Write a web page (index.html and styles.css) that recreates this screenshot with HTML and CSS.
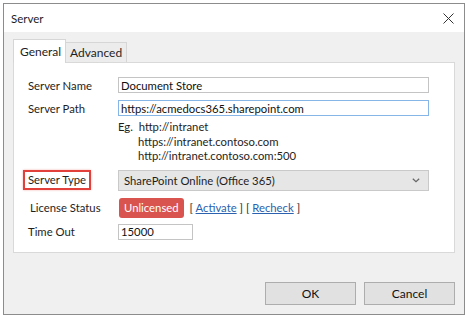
FILE: index.html
```html
<!doctype html>
<html>
<head>
<meta charset="utf-8">
<title>Server</title>
	<link rel="stylesheet" href="styles.css">
</head>

<body>
	<div class="window">
		<div class="titlebar">
			<span class="title">Server</span>
			<svg class="close" width="11" height="11" viewBox="0 0 11 11">
				<path d="M0.5 0.5 L10.5 10.5 M10.5 0.5 L0.5 10.5" stroke="#333" stroke-width="1" fill="none"/>
			</svg>
		</div>
		<div class="content">
			<div class="tabs">
				<div class="tab active">General</div>
				<div class="tab">Advanced</div>
			</div>
			<div class="panel">
				<div class="row row-name">
					<span class="lbl">Server Name</span>
					<input class="field wide" type="text" value="Document Store">
				</div>
				<div class="row row-path">
					<span class="lbl">Server Path</span>
					<input class="field wide focus" type="text" value="https://acmedocs365.sharepoint.com">
				</div>
				<div class="row row-eg">
					<span class="lbl"></span>
					<div class="eg">
						<div>Eg.&nbsp; http://intranet</div>
						<div class="eg-more">https://intranet.contoso.com</div>
						<div class="eg-more">http://intranet.contoso.com:500</div>
					</div>
				</div>
				<div class="row row-type">
					<span class="lbl"><span class="marked">Server Type</span></span>
					<div class="select">
						<span>SharePoint Online (Office 365)</span>
						<svg width="8" height="5" viewBox="0 0 8 5">
							<path d="M0.8 0.8 L4 3.8 L7.2 0.8" stroke="#666" stroke-width="1.2" fill="none"/>
						</svg>
					</div>
				</div>
				<div class="row row-license">
					<span class="lbl lbl-license">License Status</span>
					<div class="license">
						<span class="badge">Unlicensed</span>
						<span class="links">[ <a href="#">Activate</a> ] [ <a href="#">Recheck</a> ]</span>
					</div>
				</div>
				<div class="row row-time">
					<span class="lbl">Time Out</span>
					<input class="field short" type="text" value="15000">
				</div>
			</div>
			<div class="actions">
				<button class="btn ok">OK</button>
				<button class="btn">Cancel</button>
			</div>
		</div>
	</div>
</body>
</html>
```

FILE: styles.css
```css
*{box-sizing: border-box;}
body{
	margin: 0;
	padding: 3px;
	background-color: #fff;
	font-family: "Lato", "Open Sans", sans-serif;
	font-size: 11.3px;
	color: #1e1e1e;
}
.window{
	width: 462px;
	height: 312px;
	border: 1px solid #8c8c8c;
	background-color: #f0f0f0;
	display: flex;
	flex-direction: column;
}
.titlebar{
	height: 28px;
	background-color: #fff;
	display: flex;
	align-items: center;
	justify-content: space-between;
	padding: 0 10px 0 7px;
}
.title{
	font-size: 11.5px;
}
.content{
	padding: 7px 9px 0 9px;
	flex: 1;
	display: flex;
	flex-direction: column;
}
.tabs{
	display: flex;
	align-items: flex-end;
}
.tab{
	height: 20px;
	padding: 0 4px;
	border: 1px solid #d6d6d6;
	border-bottom: none;
	border-left: none;
	background-color: #ececec;
	display: flex;
	align-items: center;
	font-size: 12px;
}
.tab.active{
	height: 24px;
	padding: 0 6px 0 6px;
	border-left: 1px solid #d6d6d6;
	background-color: #fff;
	margin-bottom: -1px;
	position: relative;
	z-index: 1;
	width: 53px;
}
.panel{
	height: 191px;
	background-color: #fff;
	border: 1px solid #d9d9d9;
	padding: 14px 0 0 14px;
}
.row{
	display: flex;
	align-items: center;
}
.lbl{
	width: 90px;
	flex-shrink: 0;
	white-space: nowrap;
}
.lbl-license{
	padding-left: 2px;
}
.field{
	height: 16px;
	border: 1px solid #c4c4c4;
	padding: 0 2px;
	font: inherit;
	color: #111;
	outline: none;
}
.field.wide{
	width: 311px;
}
.field.focus{
	border-color: #86b6e8;
}
.field.short{
	width: 75px;
}
.row-path{
	margin-top: 7px;
}
.row-eg{
	margin-top: 4px;
	align-items: flex-start;
}
.eg{
	line-height: 14.5px;
}
.eg-more{
	padding-left: 20px;
}
.row-type{
	margin-top: 6px;
}
.marked{
	display: inline-block;
	border: 2px solid #e2403a;
	padding: 0 3px 0 3px;
	margin-left: -5px;
	height: 20px;
	line-height: 16px;
	box-shadow: 0 0 2px rgba(226, 64, 58, 0.4);
}
.select{
	width: 311px;
	height: 21px;
	border: 1px solid #c9c9c9;
	background-color: #e6e6e6;
	display: flex;
	align-items: center;
	justify-content: space-between;
	padding: 0 8px 0 5px;
}
.row-license{
	margin-top: 7px;
}
.license{
	display: flex;
	align-items: center;
}
.badge{
	background-color: #d9534f;
	color: #fff;
	height: 20px;
	padding: 0 5px;
	border-radius: 3px;
	display: flex;
	align-items: center;
	margin-left: 1px;
}
.links{
	margin-left: 6px;
}
.links a{
	color: #2a62b0;
}
.row-time{
	margin-top: 6px;
}
.actions{
	display: flex;
	justify-content: flex-end;
	gap: 8px;
	margin-top: 29px;
}
.btn{
	width: 91px;
	height: 23px;
	background-color: #e1e1e1;
	border: 1px solid #adadad;
	font: inherit;
	font-size: 12px;
	color: #111;
}
```
